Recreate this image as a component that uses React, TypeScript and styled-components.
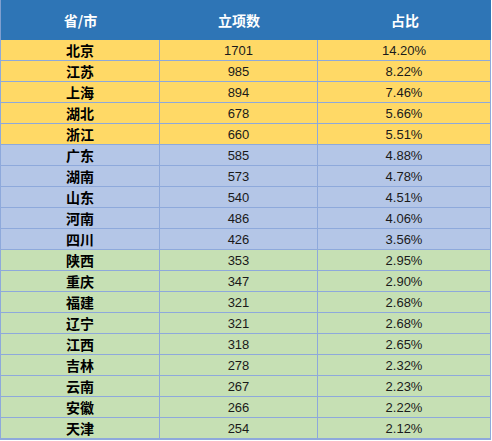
import React from 'react';
import styled, { createGlobalStyle } from 'styled-components';

type Tone = 'yellow' | 'blue' | 'green';

type RowType = {
  name: string,
  count: number,
  share: string,
  tone: Tone,
};

const rows: RowType[] = [
  { name: '北京', count: 1701, share: '14.20%', tone: 'yellow' },
  { name: '江苏', count: 985, share: '8.22%', tone: 'yellow' },
  { name: '上海', count: 894, share: '7.46%', tone: 'yellow' },
  { name: '湖北', count: 678, share: '5.66%', tone: 'yellow' },
  { name: '浙江', count: 660, share: '5.51%', tone: 'yellow' },
  { name: '广东', count: 585, share: '4.88%', tone: 'blue' },
  { name: '湖南', count: 573, share: '4.78%', tone: 'blue' },
  { name: '山东', count: 540, share: '4.51%', tone: 'blue' },
  { name: '河南', count: 486, share: '4.06%', tone: 'blue' },
  { name: '四川', count: 426, share: '3.56%', tone: 'blue' },
  { name: '陕西', count: 353, share: '2.95%', tone: 'green' },
  { name: '重庆', count: 347, share: '2.90%', tone: 'green' },
  { name: '福建', count: 321, share: '2.68%', tone: 'green' },
  { name: '辽宁', count: 321, share: '2.68%', tone: 'green' },
  { name: '江西', count: 318, share: '2.65%', tone: 'green' },
  { name: '吉林', count: 278, share: '2.32%', tone: 'green' },
  { name: '云南', count: 267, share: '2.23%', tone: 'green' },
  { name: '安徽', count: 266, share: '2.22%', tone: 'green' },
  { name: '天津', count: 254, share: '2.12%', tone: 'green' },
];

const toneColors: Record<Tone, string> = {
  yellow: '#ffd966',
  blue: '#b4c6e7',
  green: '#c6e0b4',
};

export default function App() {
  return (
    <>
      <GlobalStyle />
      <Table>
        <Header>
          <HeadCell>省/市</HeadCell>
          <HeadCell>立项数</HeadCell>
          <HeadCell>占比</HeadCell>
        </Header>
        <Body>
          {rows.map((r) => (
            <React.Fragment key={r.name}>
              <NameCell $tone={r.tone}>{r.name}</NameCell>
              <Cell $tone={r.tone}>{r.count}</Cell>
              <Cell $tone={r.tone}>{r.share}</Cell>
            </React.Fragment>
          ))}
        </Body>
      </Table>
    </>
  );
}

const GlobalStyle = createGlobalStyle`
  body {
    margin: 0;
    background: #ffffff;
    font-family: 'Liberation Sans', 'Noto Sans CJK SC', sans-serif;
  }
`;

const Table = styled.div`
  width: 491px;
  display: flex;
  flex-direction: column;
`;

const Header = styled.div`
  height: 40px;
  display: grid;
  grid-template-columns: 159px 158px 174px;
  background: #2e75b6;
  border-left: 1px solid #7f9fcf;
  box-sizing: border-box;
`;

const HeadCell = styled.div`
  display: flex;
  align-items: center;
  justify-content: center;
  color: #ffffff;
  font-family: 'Noto Sans CJK SC', sans-serif;
  font-weight: 700;
  font-size: 14px;
`;

const Body = styled.div`
  display: grid;
  grid-template-columns: 158px 157px 172px;
  grid-auto-rows: 20px;
  gap: 1px;
  padding: 0 1px 2px 1px;
  background: #8ea9db;
`;

const Cell = styled.div<{ $tone: Tone }>`
  display: flex;
  align-items: center;
  justify-content: center;
  background: ${(p) => toneColors[p.$tone]};
  color: #1a1a1a;
  font-size: 13px;
`;

const NameCell = styled(Cell)`
  font-family: 'Noto Sans CJK SC', sans-serif;
  font-weight: 700;
  font-size: 14px;
  color: #000000;
`;
